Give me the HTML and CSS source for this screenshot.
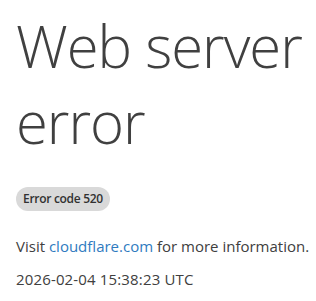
FILE: index.html
```html
<!DOCTYPE html>
<html>
<head>
<meta charset="utf-8">
<link rel="stylesheet" href="styles.css">
</head>
<body>
<main class="page">
  <h1 class="title">Web server error</h1>
  <span class="badge">Error code 520</span>
  <p class="info">Visit <a class="link" href="#">cloudflare.com</a> for more information.</p>
  <p class="time">2026-02-04 15:38:23 UTC</p>
</main>
</body>
</html>
```
FILE: styles.css
```css
html, body {
  margin: 0;
  padding: 0;
  background: #ffffff;
}
.page {
  padding: 8px 16px;
  font-family: "Open Sans", "Noto Sans", sans-serif;
  color: #404040;
  display: flex;
  flex-direction: column;
  align-items: flex-start;
}
.title {
  margin: 0 -16px 0 0;
  font-weight: 300;
  font-size: 58px;
  letter-spacing: -1px;
  line-height: 76px;
  color: #404040;
}
.badge {
  margin-top: 27px;
  background: #d9d9d9;
  color: #313131;
  font-size: 12px;
  font-weight: 600;
  letter-spacing: -0.3px;
  height: 24px;
  line-height: 24px;
  padding: 0 7px;
  border-radius: 12px;
}
.info {
  margin: 25px -16px 0 0;
  font-size: 15px;
  line-height: 20px;
  white-space: nowrap;
}
.link {
  color: #2f7bbf;
  text-decoration: none;
}
.time {
  margin: 13px 0 0;
  font-size: 15px;
  letter-spacing: 0.15px;
  line-height: 20px;
}
```
